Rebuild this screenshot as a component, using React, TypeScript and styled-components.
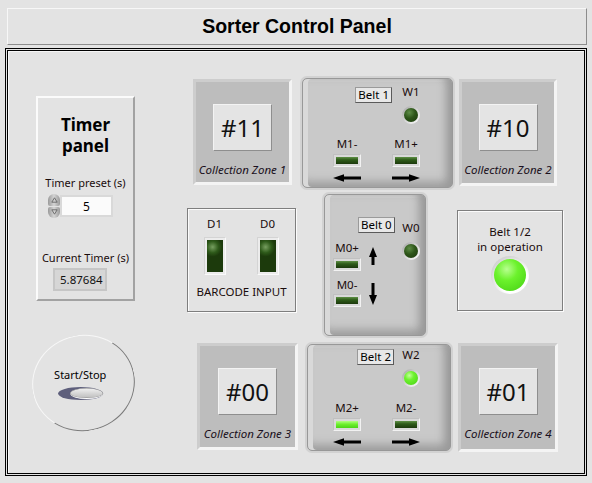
import React from 'react';
import styled, { createGlobalStyle } from 'styled-components';

const UI = `"Noto Sans", "Open Sans", "DejaVu Sans", sans-serif`;

const Global = createGlobalStyle`
  html, body { margin: 0; padding: 0; background: #e3e3e3; }
  body { font-family: ${UI}; color: #111; font-size: 11.5px; }
  * { box-sizing: border-box; }
`;

const Page = styled.div`
  width: 592px;
  height: 483px;
  padding: 8px 0 0 5px;
  overflow: hidden;
  background: #e3e3e3;
`;

const TitleBar = styled.div`
  margin-left: 2px;
  width: 580px;
  height: 37px;
  display: flex;
  align-items: center;
  justify-content: center;
  border: 1px solid;
  border-color: #f7f7f7 #8c8c8c #8c8c8c #f7f7f7;
  font-family: "Liberation Sans", Arial, sans-serif;
  font-weight: bold;
  font-size: 19.5px;
  color: #000;
`;

const Frame = styled.div`
  margin-top: 3px;
  width: 582px;
  height: 428px;
  border: 3px double #000;
  box-shadow: inset 1px 1px 0 #f6f6f6;
  display: flex;
`;

const LeftCol = styled.div`
  width: 179px;
  display: flex;
  flex-direction: column;
  padding-top: 45px;
`;

const TimerPanel = styled.div`
  margin-left: 28px;
  width: 99px;
  height: 205px;
  border: 2px solid;
  border-color: #fbfbfb #a2a2a2 #a2a2a2 #fbfbfb;
  display: flex;
  flex-direction: column;
  align-items: center;
  padding-top: 16px;
`;

const TimerTitle = styled.div`
  font-weight: bold;
  font-size: 17px;
  line-height: 21px;
  text-align: center;
  color: #000;
`;

const Caption = styled.div<{ $mt: number }>`
  margin-top: ${p => p.$mt}px;
  line-height: 14px;
  white-space: nowrap;
  font-size: 11px;
  color: #1a0c0c;
`;

const NumericRow = styled.div`
  margin-top: 4px;
  align-self: flex-start;
  margin-left: 10px;
  display: flex;
  align-items: center;
  height: 24px;
`;

const Spinner = styled.div`
  width: 12px;
  height: 24px;
  display: flex;
  flex-direction: column;
  gap: 1px;
`;

const SpinBtn = styled.div<{ $up?: boolean }>`
  flex: 1;
  border-radius: ${p => (p.$up ? '6px 6px 2px 2px' : '2px 2px 6px 6px')};
  background: linear-gradient(90deg, #9a9a9a, #d4d4d4 50%, #9a9a9a);
  display: flex;
  align-items: center;
  justify-content: center;
`;

const NumInput = styled.div`
  width: 53px;
  height: 22px;
  background: #fbfbfb;
  border: 2px solid #d9d9d9;
  display: flex;
  align-items: center;
  justify-content: center;
  font-size: 12px;
  color: #000;
`;

const Indicator = styled.div`
  margin-top: 3px;
  align-self: flex-start;
  margin-left: 15px;
  width: 54px;
  height: 23px;
  border: 2px solid #c6c6c6;
  background: #d6d6d6;
  display: flex;
  align-items: center;
  padding-left: 5px;
  font-size: 11.5px;
  color: #111;
`;

const StartStop = styled.div`
  margin-left: 24px;
  margin-top: 34px;
  width: 103px;
  height: 96px;
  border-radius: 50%;
  border: 1.5px solid;
  border-color: #f7f7f7 #7c7c7c #7c7c7c #f7f7f7;
  transform: rotate(-12deg);
  display: flex;
  align-items: center;
  justify-content: center;
`;

const StartStopInner = styled.div`
  transform: rotate(12deg);
  display: flex;
  flex-direction: column;
  align-items: center;
  padding-right: 6px;
  padding-top: 1px;
`;

const StartLabel = styled.div`
  font-size: 11px;
  line-height: 14px;
  color: #000;
`;

const Well = styled.div`
  margin-top: 5px;
  width: 45px;
  height: 13px;
  border-radius: 50%;
  background: #5e5f7c;
  display: flex;
  justify-content: flex-end;
  align-items: center;
`;

const Knob = styled.div`
  width: 33px;
  height: 11px;
  border-radius: 50%;
  background: linear-gradient(#f2f2f2, #bdbdbd);
  border-bottom: 1px solid #fff;
  box-shadow: inset 0 0 0 0.5px #8d8d8d;
`;

const Grid = styled.div`
  margin-top: 25px;
  display: grid;
  grid-template-columns: 111px 155px 106px;
  grid-template-rows: 114px 148px 111px;
  column-gap: 2px;
  row-gap: 2px;
  align-items: start;
  justify-items: start;
`;

const Zone = styled.div<{ $w: number; $h: number; $mt: number; $ml: number }>`
  width: ${p => p.$w}px;
  height: ${p => p.$h}px;
  margin: ${p => p.$mt}px 0 0 ${p => p.$ml}px;
  background: #bdbdbd;
  border: 3px solid;
  border-color: #cdcdcd #f4f4f4 #f4f4f4 #cdcdcd;
  display: flex;
  flex-direction: column;
  align-items: center;
  padding-top: 22px;
`;

const ZoneNumber = styled.div`
  width: 59px;
  height: 47px;
  background: #e4e4e4;
  border: 1px solid;
  border-color: #f3f3f3 #8e8e8e #8e8e8e #f3f3f3;
  display: flex;
  align-items: center;
  justify-content: center;
  font-size: 24px;
  color: #111;
`;

const ZoneLabel = styled.div`
  margin-top: 12px;
  font-style: italic;
  line-height: 14px;
  white-space: nowrap;
  color: #1a1020;
`;

const BeltFrame = styled.div<{ $w: number; $h: number; $ml?: number }>`
  width: ${p => p.$w}px;
  height: ${p => p.$h}px;
  margin-left: ${p => p.$ml || 0}px;
  border-radius: 7px;
  background: #d2d2d2;
  padding: 2px;
`;

const BeltFace = styled.div`
  width: 100%;
  height: 100%;
  border: 1px solid #989898;
  border-radius: 5px;
  background: #c9c9c9;
  box-shadow: inset 5px 0 0 #d9d9d9, inset -9px 0 8px -3px #9a9a9a,
    inset 0 -9px 8px -3px #a2a2a2, inset 0 3px 0 #cfcfcf;
  display: flex;
  flex-direction: column;
`;

const BeltTop = styled.div<{ $pt: number; $pr: number; $gap: number }>`
  display: flex;
  justify-content: flex-end;
  align-items: flex-start;
  padding-top: ${p => p.$pt}px;
  padding-right: ${p => p.$pr}px;
  gap: ${p => p.$gap}px;
`;

const BeltLabel = styled.div<{ $mt?: number; $ml?: number }>`
  margin-top: ${p => p.$mt || 0}px;
  margin-left: ${p => p.$ml || 0}px;
  height: 16px;
  padding: 0 2px;
  background: #e8e8e8;
  border: 1px solid;
  border-color: #9a9a9a #5a5a5a #5a5a5a #9a9a9a;
  line-height: 14px;
  white-space: nowrap;
  color: #000;
  align-self: flex-start;
`;

const WGroup = styled.div<{ $mt?: number }>`
  width: 20px;
  margin-top: ${p => p.$mt || 0}px;
  display: flex;
  flex-direction: column;
  align-items: center;
`;

const Tag = styled.div`
  line-height: 14px;
  white-space: nowrap;
  color: #1a0c0c;
`;

const LedRing = styled.div`
  margin-top: 7px;
  width: 18px;
  height: 18px;
  border-radius: 50%;
  padding: 2px;
  background: linear-gradient(135deg, #a4a4a4 0%, #dadada 55%, #ffffff 100%);
`;

const LedDot = styled.div<{ $on?: boolean }>`
  width: 100%;
  height: 100%;
  border-radius: 50%;
  background: ${p =>
    p.$on
      ? 'radial-gradient(circle at 38% 32%, #c4ff9c 0%, #6ef22e 35%, #45d012 100%)'
      : 'radial-gradient(circle at 38% 32%, #5e8d46 0%, #2d5519 45%, #1b380b 100%)'};
`;

const BeltBottom = styled.div<{ $mt: number; $pl: number }>`
  margin-top: ${p => p.$mt}px;
  padding-left: ${p => p.$pl}px;
  display: flex;
  gap: 31px;
`;

const MotorCol = styled.div`
  width: 28px;
  display: flex;
  flex-direction: column;
  align-items: center;
`;

const RectLed = styled.div<{ $on?: boolean; $mt?: number }>`
  margin-top: ${p => (p.$mt === undefined ? 3 : p.$mt)}px;
  width: 28px;
  height: 13px;
  padding: 2px;
  background: #d9d9d9;
  border: 1px solid;
  border-color: #c0c0c0 #f2f2f2 #f2f2f2 #c0c0c0;
  &::after {
    content: '';
    display: block;
    width: 100%;
    height: 100%;
    background: ${p =>
      p.$on
        ? 'linear-gradient(#b2ff84 0%, #6ef02e 45%, #4ad416 100%)'
        : 'linear-gradient(#5f9046 0%, #2f5c1a 40%, #1c390c 100%)'};
  }
`;

const ArrowSvg = styled.svg<{ $mt?: number }>`
  display: block;
  margin-top: ${p => p.$mt || 0}px;
`;

const HArrow = ({ dir }: { dir: 'left' | 'right' }) => (
  <ArrowSvg $mt={7} width="28" height="8" viewBox="0 0 28 8">
    {dir === 'right' ? (
      <path d="M0 2.6h17V0.2l11 3.8-11 3.8V5.4H0z" fill="#000" />
    ) : (
      <path d="M28 2.6H11V0.2L0 4l11 3.8V5.4h17z" fill="#000" />
    )}
  </ArrowSvg>
);

const VArrow = ({ dir, h, mt }: { dir: 'up' | 'down'; h: number; mt: number }) => (
  <ArrowSvg $mt={mt} width="24" height={h} viewBox={`0 0 24 ${h}`}>
    {dir === 'up' ? (
      <path d={`M12 0l4 10h-2.5V${h}h-3V10H8z`} fill="#000" />
    ) : (
      <path d={`M10.5 0h3v${h - 10}H16l-4 10-4-10h2.5z`} fill="#000" />
    )}
  </ArrowSvg>
);

const Belt0Face = styled(BeltFace)`
  flex-direction: row;
  padding-left: 8px;
`;

const Belt0Col = styled.div<{ $w: number; $pt: number; $ml?: number }>`
  width: ${p => p.$w}px;
  margin-left: ${p => p.$ml || 0}px;
  padding-top: ${p => p.$pt}px;
  display: flex;
  flex-direction: column;
  align-items: center;
`;

const ArrowCol = styled.div`
  width: 24px;
  padding-top: 22px;
  display: flex;
  flex-direction: column;
  align-items: flex-start;
`;

const EtchedBox = styled.div<{ $w: number; $h: number; $mt: number; $pt: number }>`
  width: ${p => p.$w}px;
  height: ${p => p.$h}px;
  margin-top: ${p => p.$mt}px;
  padding-top: ${p => p.$pt}px;
  border: 1px solid #7e7e7e;
  box-shadow: inset 1px 1px 0 #fbfbfb, 1px 1px 0 #fbfbfb;
  display: flex;
  flex-direction: column;
  align-items: center;
`;

const DRow = styled.div`
  display: flex;
  gap: 31px;
  padding-right: 1px;
`;

const DCol = styled.div`
  width: 22px;
  display: flex;
  flex-direction: column;
  align-items: center;
`;

const TallLed = styled.div`
  margin-top: 6px;
  width: 22px;
  height: 38px;
  padding: 2px;
  background: #ececec;
  border: 1px solid;
  border-color: #d4d4d4 #fafafa #fafafa #d4d4d4;
  &::after {
    content: '';
    display: block;
    width: 100%;
    height: 100%;
    background: radial-gradient(ellipse 60% 30% at 35% 22%, #779f60 0%, #2e5a1a 60%, #1c3a0c 100%);
  }
`;

const BigLedRing = styled.div`
  margin-top: 2px;
  width: 38px;
  height: 38px;
  border-radius: 50%;
  padding: 3px;
  background: radial-gradient(circle at 60% 62%, #ffffff 45%, #d6d6d6 70%, #bdbdbd 100%);
`;

const BigLed = styled.div`
  width: 100%;
  height: 100%;
  border-radius: 50%;
  background: radial-gradient(circle at 40% 32%, #b8ff90 0%, #6cf22c 38%, #44cf12 100%);
`;

const StatusText = styled.div`
  line-height: 15px;
  text-align: center;
  color: #1a0c0c;
`;

const TinyTri = ({ up }: { up?: boolean }) => (
  <svg width="7" height="6" viewBox="0 0 7 6">
    <path d={up ? 'M3.5 0.8L6.2 5.2H0.8z' : 'M3.5 5.2L6.2 0.8H0.8z'} fill="none" stroke="#666" strokeWidth="0.9" />
  </svg>
);

const ZoneCard = ({ num, label, w, h, mt, ml }: { num: string; label: string; w: number; h: number; mt: number; ml: number }) => (
  <Zone $w={w} $h={h} $mt={mt} $ml={ml}>
    <ZoneNumber>{num}</ZoneNumber>
    <ZoneLabel>{label}</ZoneLabel>
  </Zone>
);

export default function App() {
  return (
    <Page>
      <Global />
      <TitleBar>Sorter Control Panel</TitleBar>
      <Frame>
        <LeftCol>
          <TimerPanel>
            <TimerTitle>
              Timer
              <br />
              panel
            </TimerTitle>
            <Caption $mt={20}>Timer preset (s)</Caption>
            <NumericRow>
              <Spinner>
                <SpinBtn $up>
                  <TinyTri up />
                </SpinBtn>
                <SpinBtn>
                  <TinyTri />
                </SpinBtn>
              </Spinner>
              <NumInput>5</NumInput>
            </NumericRow>
            <Caption $mt={33}>Current Timer (s)</Caption>
            <Indicator>5.87684</Indicator>
          </TimerPanel>
          <StartStop>
            <StartStopInner>
              <StartLabel>Start/Stop</StartLabel>
              <Well>
                <Knob />
              </Well>
            </StartStopInner>
          </StartStop>
        </LeftCol>
        <Grid>
          <ZoneCard num="#11" label="Collection Zone 1" w={99} h={106} mt={3} ml={6} />
          <BeltFrame $w={155} $h={114}>
            <BeltFace>
              <BeltTop $pt={6} $pr={31} $gap={9}>
                <BeltLabel $mt={2}>Belt 1</BeltLabel>
                <WGroup>
                  <Tag>W1</Tag>
                  <LedRing>
                    <LedDot />
                  </LedRing>
                </WGroup>
              </BeltTop>
              <BeltBottom $mt={13} $pl={30}>
                <MotorCol>
                  <Tag>M1-</Tag>
                  <RectLed />
                  <HArrow dir="left" />
                </MotorCol>
                <MotorCol>
                  <Tag>M1+</Tag>
                  <RectLed />
                  <HArrow dir="right" />
                </MotorCol>
              </BeltBottom>
            </BeltFace>
          </BeltFrame>
          <ZoneCard num="#10" label="Collection Zone 2" w={98} h={107} mt={3} ml={2} />

          <EtchedBox $w={109} $h={104} $mt={16} $pt={8}>
            <DRow>
              <DCol>
                <Tag>D1</Tag>
                <TallLed />
              </DCol>
              <DCol>
                <Tag>D0</Tag>
                <TallLed />
              </DCol>
            </DRow>
            <Tag style={{ marginTop: 10 }}>BARCODE INPUT</Tag>
          </EtchedBox>
          <BeltFrame $w={106} $h={146} $ml={22}>
            <Belt0Face>
              <Belt0Col $w={28} $pt={46}>
                <Tag>M0+</Tag>
                <RectLed />
                <Tag style={{ marginTop: 7 }}>M0-</Tag>
                <RectLed $mt={2} />
              </Belt0Col>
              <ArrowCol>
                <BeltLabel $ml={-3}>Belt 0</BeltLabel>
                <VArrow dir="up" h={18} mt={14} />
                <VArrow dir="down" h={22} mt={18} />
              </ArrowCol>
              <Belt0Col $w={28} $pt={26} $ml={12}>
                <Tag>W0</Tag>
                <LedRing>
                  <LedDot />
                </LedRing>
              </Belt0Col>
            </Belt0Face>
          </BeltFrame>
          <EtchedBox $w={106} $h={101} $mt={18} $pt={13}>
            <StatusText>
              Belt 1/2
              <br />
              in operation
            </StatusText>
            <BigLedRing>
              <BigLed />
            </BigLedRing>
          </EtchedBox>

          <ZoneCard num="#00" label="Collection Zone 3" w={101} h={107} mt={1} ml={10} />
          <BeltFrame $w={148} $h={111} $ml={5}>
            <BeltFace>
              <BeltTop $pt={3} $pr={29} $gap={7}>
                <BeltLabel $mt={1}>Belt 2</BeltLabel>
                <WGroup>
                  <Tag>W2</Tag>
                  <LedRing>
                    <LedDot $on />
                  </LedRing>
                </WGroup>
              </BeltTop>
              <BeltBottom $mt={14} $pl={25}>
                <MotorCol>
                  <Tag>M2+</Tag>
                  <RectLed $on />
                  <HArrow dir="left" />
                </MotorCol>
                <MotorCol>
                  <Tag>M2-</Tag>
                  <RectLed />
                  <HArrow dir="right" />
                </MotorCol>
              </BeltBottom>
            </BeltFace>
          </BeltFrame>
          <ZoneCard num="#01" label="Collection Zone 4" w={100} h={109} mt={1} ml={1} />
        </Grid>
      </Frame>
    </Page>
  );
}
